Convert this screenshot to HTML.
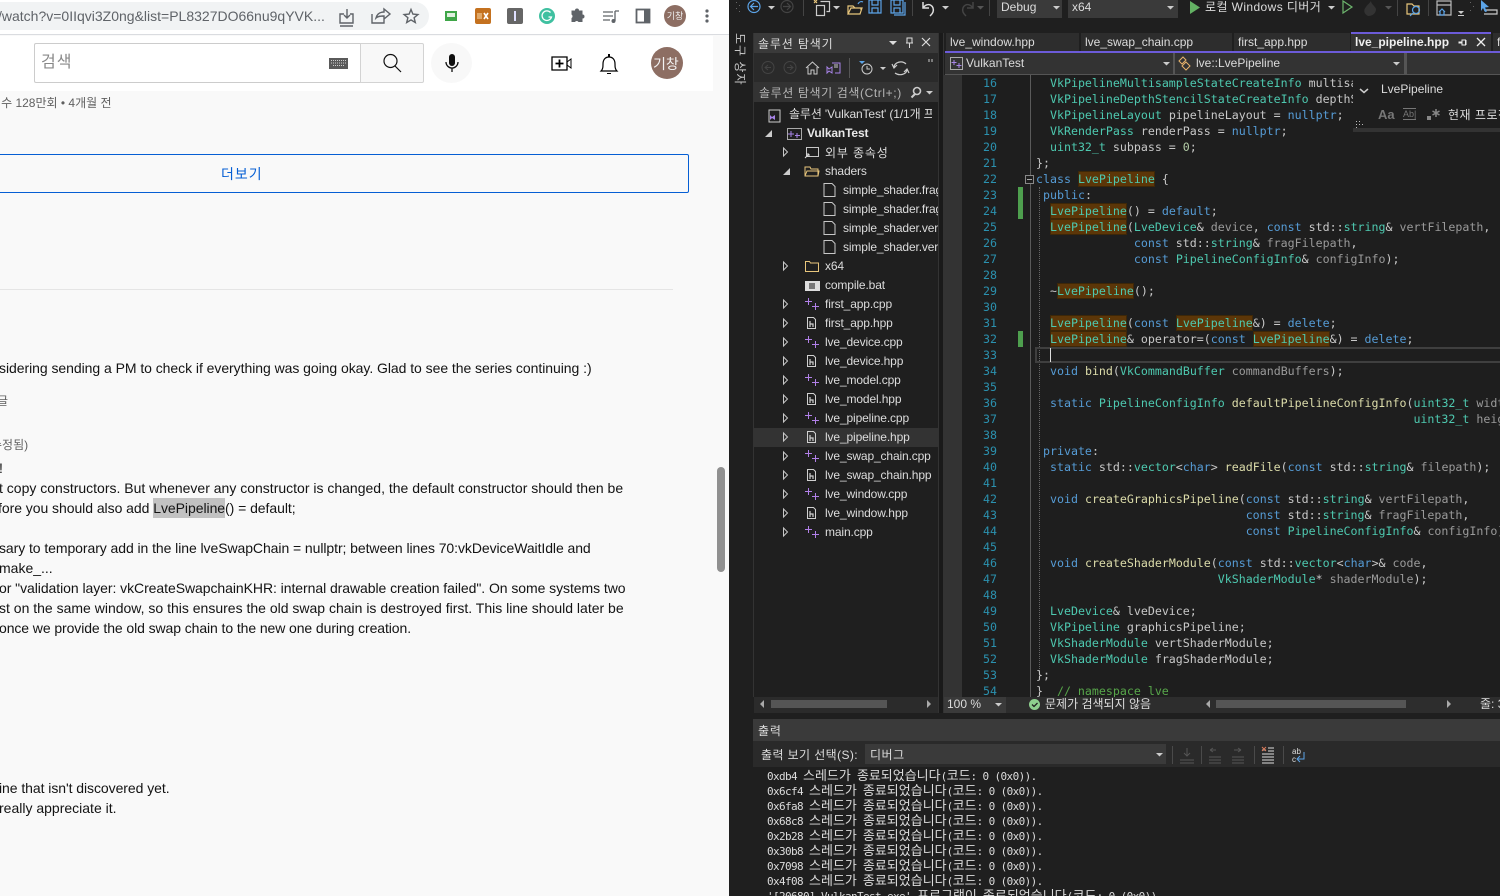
<!DOCTYPE html>
<html lang="ko"><head><meta charset="utf-8"><title>VS</title>
<style>
html,body{margin:0;padding:0;width:1500px;height:896px;overflow:hidden;background:#1f1f1f}
*{box-sizing:border-box}
body{position:relative;font-family:"Liberation Sans","Noto Sans CJK KR",sans-serif}
.a{position:absolute;white-space:pre}
svg{position:absolute;overflow:visible}
#web{position:absolute;left:0;top:0;width:729px;height:896px;background:#f9f9f9;overflow:hidden;color:#0f0f0f}
#web .t{position:absolute;left:0;font-size:14px;line-height:20px;white-space:pre;color:#131313}
#web .g{color:#606060}
#vs{position:absolute;left:729px;top:0;width:771px;height:896px;background:#1f1f1f;overflow:hidden}
.v{position:absolute;white-space:pre;color:#dcdcdc;font-size:12px;line-height:16px}
.tree{position:absolute;left:754px;top:102px;width:184px;height:595px;overflow:hidden}
.r{position:absolute;left:71px;white-space:pre;font-size:12px;letter-spacing:-.13px;line-height:19px;height:19px;color:#dcdcdc}
.code{position:absolute;left:1036px;top:75px;width:464px;height:622px;overflow:hidden;font-family:"DejaVu Sans Mono",monospace;font-size:11.62px;line-height:16px;color:#c8c8c8}
.code div{position:absolute;left:0;white-space:pre;height:16px}
.n{position:absolute;left:962px;width:35px;text-align:right;font-family:"DejaVu Sans Mono",monospace;font-size:11.62px;line-height:16px;color:#2b91af;white-space:pre}
.ty{color:#4ec9b0}.kw{color:#569cd6}.fn{color:#dcdcaa}.pa{color:#9a9a9a}.co{color:#57a64a}.nu{color:#b5cea8}
.h{display:inline-block;height:16px;background:#5c3608;box-shadow:inset 0 0 0 1px #3d2708;color:#4ec9b0}
.tab{position:absolute;top:33px;height:18px;background:#2d2d2d;color:#dcdcdc;font-size:12px;line-height:18px;padding-left:4px;white-space:pre;overflow:hidden}
.out{position:absolute;left:767px;font-family:"DejaVu Sans Mono",monospace;font-size:11px;letter-spacing:-.62px;line-height:15px;color:#dcdcdc;white-space:pre}
.out b{font-weight:400;font-family:"Noto Sans CJK KR",sans-serif;font-size:13px;letter-spacing:0;line-height:15px}
.sep{position:absolute;width:1px;background:#4a4a4a}
</style></head><body>

<div id="web">
  <div style="position:absolute;left:0;top:0;width:729px;height:35px;background:#fff;border-bottom:1px solid #dadce0"></div>
  <div style="position:absolute;left:0;top:2px;width:429px;height:28px;background:#f1f3f4;border-radius:0 14px 14px 0"></div>
  <div class="a" style="left:-2px;top:8px;font-size:14px;line-height:16px;color:#5f6368">/watch?v=0IIqvi3Z0ng&amp;list=PL8327DO66nu9qYVK...</div>

  <svg style="left:0;top:0" width="729" height="92" viewBox="0 0 729 92">
    <g fill="none" stroke="#5f6368" stroke-width="1.4">
      <path d="M344 14h-4v9h13v-9h-3M347 9v9M344 15l3 3 3-3M340 26h13"/>
      <path d="M372 14v9h12v-4M376 18c1-4 4-6 8-6V9l6 5-6 5v-3c-3 0-6 0-8 2z"/>
      <path d="M411 9.500l1.900 4.600 5 .4-3.800 3.200 1.200 4.800-4.300-2.600-4.300 2.600 1.200-4.800-3.800-3.200 5-.4z"/>
    </g>
    <rect x="445" y="11" width="12" height="10" fill="#3fa648"/><rect x="447" y="13" width="8" height="4" fill="#dff0df"/>
    <rect x="475" y="8" width="16" height="16" rx="2" fill="#c4711f"/><rect x="477" y="13" width="5" height="6" fill="#e0a868"/><path d="M484 13l4 6M488 13l-4 6" stroke="#fff" stroke-width="1.600"/>
    <rect x="507" y="8" width="16" height="16" rx="2" fill="#666"/><rect x="514" y="11" width="2" height="10" fill="#dfe0ff"/>
    <circle cx="547" cy="16" r="8" fill="#3fc0a0"/><path d="M550.500 12.500a4.800 4.800 0 1 0 1 4.500h-3" fill="none" stroke="#fff" stroke-width="1.300"/>
    <path d="M572 12h3.500a2 2 0 0 1 4 0h3.500v4a2 2 0 0 1 0 4v3.500h-4a2 2 0 0 0-3.500 0H572v-4a2 2 0 0 0 0-3.500z" fill="#5f6368" transform="translate(-.5 -1.500)"/>
    <path d="M603 12h10M603 16h10M603 20h7M615 11h4M615 11v10" stroke="#5f6368" stroke-width="1.300" fill="none"/><circle cx="613.500" cy="21" r="2" fill="#5f6368"/>
    <rect x="636.500" y="9.500" width="13" height="13" fill="#fff" stroke="#5f6368" stroke-width="1.800"/><rect x="644" y="9" width="6" height="14" fill="#5f6368"/>
    <circle cx="675" cy="16" r="11" fill="#8d6e63"/>
    <circle cx="707" cy="11" r="1.600" fill="#5f6368"/><circle cx="707" cy="16" r="1.600" fill="#5f6368"/><circle cx="707" cy="21" r="1.600" fill="#5f6368"/>
  </svg>
  <div class="a" style="left:665px;top:10px;width:20px;text-align:center;font-size:9px;line-height:12px;color:#eee">기창</div>

  <!-- masthead -->
  <div style="position:absolute;left:0;top:36px;width:713px;height:55px;background:#fff"></div>
  <div style="position:absolute;left:34px;top:43px;width:327px;height:40px;background:#fff;border:1px solid #ccc;border-right:0;border-radius:2px 0 0 2px"></div>
  <div style="position:absolute;left:360px;top:43px;width:64px;height:40px;background:#f8f8f8;border:1px solid #d3d3d3;border-radius:0 2px 2px 0"></div>
  <div class="a" style="left:41px;top:53px;font-size:16px;letter-spacing:1px;line-height:20px;color:#888">검색</div>
  <div style="position:absolute;left:431px;top:43px;width:41px;height:40px;border-radius:50%;background:#f8f8f8"></div>
  <svg style="left:0;top:0" width="729" height="92" viewBox="0 0 729 92">
    <rect x="329" y="58" width="19" height="11" fill="#5a5a5a"/>
    <path d="M331 60.500h15M331 63h15M333 65.500h11" stroke="#cfcfcf" stroke-width="1" stroke-dasharray="1 1"/>
    <circle cx="390.500" cy="61" r="6.500" fill="none" stroke="#111" stroke-width="1.200"/><path d="M395 66l6 6" stroke="#111" stroke-width="1.200"/>
    <rect x="449" y="54" width="6" height="12" rx="3" fill="#0f0f0f"/><path d="M446 62a6 6 0 0 0 12 0M452 68v4" stroke="#0f0f0f" stroke-width="1.300" fill="none"/>
    <path d="M552 57h15v13h-15z" fill="none" stroke="#000" stroke-width="1.300"/><path d="M567 62l4-3v9l-4-3" fill="none" stroke="#000"/><path d="M559.500 59.500v8M555.500 63.500h8" stroke="#000" stroke-width="1.800"/>
    <path d="M601 71c2-2 2-4 2-7 0-4 2-7 6-7s6 3 6 7c0 3 0 5 2 7z" fill="none" stroke="#000" stroke-width="1.200"/><path d="M608 54h2v3h-2zM607 73h4v1h-4z" fill="#000"/>
    <circle cx="667" cy="63" r="16" fill="#8d6e63"/>
  </svg>
  <div class="a" style="left:653px;top:54px;font-size:14px;line-height:20px;color:#f3f3f3">기창</div>

  <div class="t g" style="top:93px;font-size:12px;left:-21px">조회수 128만회 • 4개월 전</div>
  <div style="position:absolute;left:-2px;top:154px;width:691px;height:39px;border:1px solid #065fd4;border-radius:2px"></div>
  <div class="t" style="left:221px;top:164px;color:#065fd4;letter-spacing:1px">더보기</div>
  <div style="position:absolute;left:0;top:289px;width:673px;height:1px;background:#e5e5e5"></div>

  <div class="t" style="top:358px;left:-1px;letter-spacing:-.05px">sidering sending a PM to check if everything was going okay. Glad to see the series continuing :)</div>
  <div class="t g" style="top:391px;left:-14px;font-size:12px">답글</div>
  <div class="t g" style="top:435px;left:-13px;font-size:12px">(수정됨)</div>
  <div class="t" style="top:458px;left:-1px">!</div>
  <div class="t" style="top:478px;left:-1px">t copy constructors. But whenever any constructor is changed, the default constructor should then be</div>
  <div class="t" style="top:498px;left:-2px;letter-spacing:-.05px">fore you should also add <span style="background:#c2c2c2;display:inline-block;height:20px">LvePipeline</span>() = default;</div>
  <div class="t" style="top:538px;left:-1px;letter-spacing:-.07px">sary to temporary add in the line lveSwapChain = nullptr; between lines 70:vkDeviceWaitIdle and</div>
  <div class="t" style="top:558px;left:-1px">make_...</div>
  <div class="t" style="top:578px;left:-1px;letter-spacing:-.06px">or "validation layer: vkCreateSwapchainKHR: internal drawable creation failed". On some systems two</div>
  <div class="t" style="top:598px;left:-1px">st on the same window, so this ensures the old swap chain is destroyed first. This line should later be</div>
  <div class="t" style="top:618px;left:-1px;letter-spacing:-.09px">once we provide the old swap chain to the new one during creation.</div>
  <div class="t" style="top:778px;left:-1px;letter-spacing:-.06px">ine that isn't discovered yet.</div>
  <div class="t" style="top:798px;left:-1px">really appreciate it.</div>

  <div style="position:absolute;left:717px;top:467px;width:8px;height:105px;background:#909090;border-radius:4px"></div>
</div>

<div id="vs"></div>

<!-- VS toolbar -->
<svg style="left:0;top:0" width="1500" height="130" viewBox="0 0 1500 130">
  <g fill="none" stroke-width="1.200">
    <circle cx="754" cy="6.500" r="6" stroke="#5ca4e8"/><path d="M758 6.500h-7M754 3l-3.500 3.500 3.500 3.500" stroke="#5ca4e8"/>
    <circle cx="787" cy="6.500" r="6" stroke="#444"/><path d="M783 6.500h7M787 3l3.500 3.500-3.500 3.500" stroke="#444"/>
    <path d="M820.500 1.500h9v10h-3" stroke="#ccc"/><rect x="816.500" y="5.500" width="8" height="10" stroke="#ccc"/><path d="M814 0l3 3M817 0l-3 3" stroke="#e8c67c"/>
    <path d="M848 14V6h5l2 2h6v2M848 14h12l2-6h-11z" stroke="#e8c67c"/><path d="M858 4c1-2 3-3 5-2" stroke="#5ca4e8"/>
    <path d="M869 0h12v13h-12zM872 0v5h6V0M872 13V8h6v5" stroke="#5ca4e8"/>
    <path d="M891 0h12v13h-12zM894 0v5h6V0M894 13V8h6v5M905 2v13h-11" stroke="#5ca4e8"/>
    <path d="M923 2v6h6M923 8c5-7 12-2 10 4-.6 1.800-2 3-3 4" stroke="#ddd" stroke-width="1.500"/>
    <path d="M973 2v6h-6M973 8c-5-7-12-2-10 4 .6 1.800 2 3 3 4" stroke="#444" stroke-width="1.500"/>
    <path d="M1349 2v12l9-6z" stroke="#6db56d" transform="translate(-6 -1)"/>
    <path d="M1407 14V4h5l2 2h5v8z" stroke="#e8c67c"/><circle cx="1416" cy="10" r="3.500" stroke="#5ca4e8"/><path d="M1413 13l-3 3" stroke="#5ca4e8"/>
    <path d="M1437 1h14v14h-14zM1437 5h14" stroke="#bbb"/><path d="M1439 12l3-3 3 3M1440 11v4h4v-4" stroke="#5ca4e8"/>
    <path d="M1484 10h13v4h-13" stroke="#ccc"/>
  </g>
  <path d="M1190 1v13l10-6.500z" fill="#63b163"/>
  <path d="M1368 16c-4-2-5-6-2-9 1-2 3-3 5-6 0 3 4 5 5 8 0 4-3 7-8 7z" fill="#333"/>
  <path d="M1481 0l8 7-4 .5 2 4-2 .5-2-4-2 3z" fill="#5ca4e8"/>
  <g fill="#ccc"><path d="M768 6h7l-3.500 3.500z"/><path d="M833 6h7l-3.500 3.500z"/><path d="M942 6h7l-3.500 3.500z"/><path d="M1328 6h7l-3.500 3.500z"/><path d="M1458 11h6l-3 3zM1458 15h6v1h-6z"/></g>
  <g fill="#555"><path d="M977 6h7l-3.500 3.500z"/><path d="M1385 6h7l-3.500 3.500z"/></g>
  <g fill="#444"><rect x="803" width="1" height="16"/><rect x="912" width="1" height="16"/><rect x="989" width="1" height="16"/><rect x="1397" width="1" height="16"/><rect x="1428" width="1" height="16"/></g>
  <g fill="#666"><rect x="736" y="2" width="1" height="1"/><rect x="739" y="5" width="1" height="1"/><rect x="736" y="8" width="1" height="1"/><rect x="739" y="11" width="1" height="1"/><rect x="1470" y="2" width="1" height="1"/><rect x="1473" y="6" width="1" height="1"/><rect x="1470" y="10" width="1" height="1"/></g>
</svg>
<div style="position:absolute;left:997px;top:0;width:65px;height:18px;background:#3a3a3a"></div>
<div style="position:absolute;left:1068px;top:0;width:110px;height:18px;background:#3a3a3a"></div>
<div class="v" style="left:1001px;top:-1px">Debug</div>
<div class="v" style="left:1072px;top:-1px">x64</div>
<div class="v" style="left:1205px;top:-1px;letter-spacing:.4px">로컬 Windows 디버거</div>
<svg style="left:0;top:0" width="1500" height="20"><path d="M1053 6h7l-3.500 3.500zM1167 6h7l-3.500 3.500z" fill="#ccc"/></svg>

<!-- left strip -->
<div class="v" style="left:732px;top:33px;writing-mode:vertical-rl;text-orientation:sideways;font-size:12px;letter-spacing:1px;line-height:16px;color:#c8c8c8;height:54px">도구 상자</div>

<!-- solution explorer -->
<div style="position:absolute;left:753px;top:33px;width:185px;height:20px;background:#3a3a3a"></div>
<div style="position:absolute;left:753px;top:53px;width:185px;height:29px;background:#2a2a2a"></div>
<div style="position:absolute;left:753px;top:82px;width:185px;height:20px;background:#333"></div>
<div style="position:absolute;left:753px;top:33px;width:1px;height:664px;background:#333"></div>
<div style="position:absolute;left:938px;top:33px;width:6px;height:680px;background:#1a1a1a;border-left:1px solid #333;border-right:1px solid #333"></div>
<div class="v" style="left:758px;top:36px;letter-spacing:.85px">솔루션 탐색기</div>
<div class="v" style="left:759px;top:85px;color:#b5b5b5;letter-spacing:.6px">솔루션 탐색기 검색(Ctrl+;)</div>
<svg style="left:0;top:0" width="940" height="102" viewBox="0 0 940 102">
  <path d="M889 41h8l-4 4z" fill="#ddd"/>
  <path d="M907 38h5v5h-5zM906 43h7M909.500 43v5" fill="none" stroke="#ddd"/>
  <path d="M922 38l8 8M930 38l-8 8" stroke="#ddd" stroke-width="1.200"/>
  <g fill="none" stroke="#444"><circle cx="768" cy="67.500" r="6"/><path d="M771 67.500h-6M768 65l-3 2.500 3 2.500"/><circle cx="790" cy="67.500" r="6"/><path d="M787 67.500h6M790 65l3 2.500-3 2.500"/></g>
  <path d="M806 68l6.500-6 6.500 6M808 67v7h3v-4h3v4h3v-7" fill="none" stroke="#ccc"/>
  <path d="M829 69l3-2v6l-3-2-2 2v-6zM832 63h8v10h-5" fill="none" stroke="#a884e8"/><path d="M834 65h4M834 67h4" stroke="#ccc"/>
  <rect x="849" y="58" width="1" height="20" fill="#555"/>
  <path d="M859 61h6l-3 3z" fill="#5ca4e8"/><circle cx="867" cy="69" r="5" fill="none" stroke="#ccc"/><path d="M867 66v3h3" fill="none" stroke="#ccc"/>
  <path d="M880 67h6l-3 3z" fill="#ccc"/>
  <path d="M894 68c0-6 8-8 12-4M892 64l2 4 3-3M907 69c0 6-8 7-12 4M909 73l-2-4-3 3" fill="none" stroke="#ccc" stroke-width="1.200"/>
  <path d="M929 59v3M932 59v3" stroke="#ccc"/>
  <circle cx="917" cy="91" r="3.500" fill="none" stroke="#ccc" stroke-width="1.600"/><path d="M915 94l-3.500 3.500" stroke="#ccc" stroke-width="2"/>
  <path d="M926 91h7l-3.500 3.500z" fill="#ccc"/>
</svg>

<!-- tree -->
<div class="tree">
  <div style="position:absolute;left:0;top:326px;width:184px;height:19px;background:#333"></div>
  <div class="r" style="left:35px;top:3px;width:143px;overflow:hidden">솔루션 'VulkanTest' (1/1개 프로젝트)</div>
  <div class="r" style="left:53px;top:22px;font-weight:700;color:#e8e8e8">VulkanTest</div>
  <div class="r" style="top:42px;letter-spacing:.85px">외부 종속성</div>
  <div class="r" style="top:60px">shaders</div>
  <div class="r" style="left:89px;top:79px">simple_shader.frag</div>
  <div class="r" style="left:89px;top:98px">simple_shader.frag.spv</div>
  <div class="r" style="left:89px;top:117px">simple_shader.vert</div>
  <div class="r" style="left:89px;top:136px">simple_shader.vert.spv</div>
  <div class="r" style="top:155px">x64</div>
  <div class="r" style="top:174px">compile.bat</div>
  <div class="r" style="top:193px">first_app.cpp</div>
  <div class="r" style="top:212px">first_app.hpp</div>
  <div class="r" style="top:231px">lve_device.cpp</div>
  <div class="r" style="top:250px">lve_device.hpp</div>
  <div class="r" style="top:269px">lve_model.cpp</div>
  <div class="r" style="top:288px">lve_model.hpp</div>
  <div class="r" style="top:307px">lve_pipeline.cpp</div>
  <div class="r" style="top:326px">lve_pipeline.hpp</div>
  <div class="r" style="top:345px">lve_swap_chain.cpp</div>
  <div class="r" style="top:364px">lve_swap_chain.hpp</div>
  <div class="r" style="top:383px">lve_window.cpp</div>
  <div class="r" style="top:402px">lve_window.hpp</div>
  <div class="r" style="top:421px">main.cpp</div>
</div>
<svg style="left:0;top:0" width="940" height="560" viewBox="0 0 940 560">
  <defs>
    <path id="ar" d="M783.500 -4v8l4-4z" fill="none" stroke="#c8c8c8"/>
    <g id="pl" stroke="#b180e8" stroke-width="1" fill="none"><path d="M808.500 -6v7M805 -2.500h7M815.500 -1v7M812 2.500h7"/></g>
    <g id="hd" fill="none" stroke="#d0d0d0"><path d="M807.500 -5.500h6l2 2v9h-8z"/><path d="M810 -2v6M810 1h3v3" stroke-width="1.200"/></g>
    <path id="fl" d="M824 -6.500h8l3 3v10h-11z" fill="none" stroke="#c8c8c8"/>
  </defs>
  <path d="M769 110h11v12h-11z" fill="none" stroke="#ccc"/><path d="M772 117l3-2v5l-3-2-2 2v-5z" fill="#a884e8"/>
  <path d="M765 137h7v-7z" fill="#ccc"/>
  <rect x="787.500" y="128.500" width="14" height="11" fill="none" stroke="#aaa"/><path d="M791 131v6M788 134h6M797 133v5M795 135.500h5" stroke="#a884e8"/>
  <use href="#ar" y="152"/>
  <rect x="806.500" y="147.500" width="12" height="9" fill="none" stroke="#c8c8c8"/><path d="M805 158l4-4M809 154h-3M809 154v3" stroke="#ddd"/>
  <path d="M783 175h7v-7z" fill="#ccc"/>
  <path d="M805 176v-9h5l1 2h7v7zM805 176l2-5h12l-1 5" fill="none" stroke="#e8c67c"/>
  <use href="#fl" y="190"/><use href="#fl" y="209"/><use href="#fl" y="228"/><use href="#fl" y="247"/>
  <use href="#ar" y="266"/><path d="M805.500 271.500v-10h4l1 1.500h8v8.500z" fill="none" stroke="#e8c67c"/>
  <rect x="805" y="281" width="15" height="10" fill="#ddd"/><rect x="809" y="283" width="6" height="6" fill="#777"/>
  <g>
    <use href="#ar" y="304"/><use href="#pl" y="304"/>
    <use href="#ar" y="323"/><use href="#hd" y="323"/>
    <use href="#ar" y="342"/><use href="#pl" y="342"/>
    <use href="#ar" y="361"/><use href="#hd" y="361"/>
    <use href="#ar" y="380"/><use href="#pl" y="380"/>
    <use href="#ar" y="399"/><use href="#hd" y="399"/>
    <use href="#ar" y="418"/><use href="#pl" y="418"/>
    <use href="#ar" y="437"/><use href="#hd" y="437"/>
    <use href="#ar" y="456"/><use href="#pl" y="456"/>
    <use href="#ar" y="475"/><use href="#hd" y="475"/>
    <use href="#ar" y="494"/><use href="#pl" y="494"/>
    <use href="#ar" y="513"/><use href="#hd" y="513"/>
    <use href="#ar" y="532"/><use href="#pl" y="532"/>
  </g>
</svg>

<!-- tabs -->
<div class="tab" style="left:946px;width:133px">lve_window.hpp</div>
<div class="tab" style="left:1081px;width:151px">lve_swap_chain.cpp</div>
<div class="tab" style="left:1234px;width:116px">first_app.hpp</div>
<div class="tab" style="left:1351px;width:140px;background:#333;font-weight:700;color:#f0f0f0;top:34px;height:17px;line-height:17px">lve_pipeline.hpp</div>
<div class="tab" style="left:1493px;width:7px">f</div>
<div style="position:absolute;left:1351px;top:32px;width:140px;height:2px;background:#6c5bd9"></div>
<div style="position:absolute;left:945px;top:51px;width:555px;height:2px;background:#6c5bd9"></div>
<svg style="left:0;top:0" width="1500" height="60"><path d="M1459 42h3v-2h3.500v5H1462v-2h-3zM1466 40v5" stroke="#eee" fill="none"/><path d="M1477 38l8 8M1485 38l-8 8" stroke="#eee" stroke-width="1.300"/></svg>

<!-- nav bar -->
<div style="position:absolute;left:945px;top:53px;width:555px;height:22px;background:#555"></div>
<div style="position:absolute;left:945px;top:53px;width:228px;height:21px;background:#333"></div>
<div style="position:absolute;left:1175px;top:53px;width:229px;height:21px;background:#333"></div>
<div style="position:absolute;left:1407px;top:53px;width:93px;height:21px;background:#333"></div>
<div class="v" style="left:966px;top:55px">VulkanTest</div>
<div class="v" style="left:1196px;top:55px">lve::LvePipeline</div>
<svg style="left:0;top:0" width="1500" height="76">
  <rect x="950.500" y="57.500" width="12" height="12" fill="none" stroke="#aaa"/><path d="M954 60v5M951.500 62.500h5M959 63v5M956.500 65.500h5" stroke="#a884e8"/>
  <path d="M1179 61l4-4 3 3-4 4zM1186 62l4 4-4 4-4-4z" fill="none" stroke="#e8b46c"/>
  <path d="M1163 62h7l-3.500 3.500zM1393 62h7l-3.500 3.500z" fill="#ccc"/>
</svg>

<!-- editor -->
<div style="position:absolute;left:944px;top:75px;width:18px;height:622px;background:#333"></div>
<div style="position:absolute;left:962px;top:75px;width:538px;height:622px;background:#1e1e1e"></div>
<div style="position:absolute;left:1018px;top:187px;width:5px;height:32px;background:#4e9f4e"></div>
<div style="position:absolute;left:1018px;top:331px;width:5px;height:16px;background:#4e9f4e"></div>
<div style="position:absolute;left:1030px;top:75px;width:1px;height:622px;background:#5a5a5a"></div>
<div style="position:absolute;left:1039px;top:187px;width:0;height:490px;border-left:1px dotted #666"></div>
<div style="position:absolute;left:1035px;top:347px;width:465px;height:16px;border:2px solid #3f3f3f;border-right:0"></div>
<div style="position:absolute;left:1050px;top:348px;width:1px;height:14px;background:#ddd"></div>
<div style="position:absolute;left:1025px;top:175px;width:9px;height:9px;border:1px solid #888;background:#1e1e1e"></div>
<div style="position:absolute;left:1027px;top:179px;width:5px;height:1px;background:#aaa"></div>

<div class="n" style="top:75px">16
17
18
19
20
21
22
23
24
25
26
27
28
29
30
31
32
33
34
35
36
37
38
39
40
41
42
43
44
45
46
47
48
49
50
51
52
53
54</div>

<div class="code">
<div style="top:0">  <span class="ty">VkPipelineMultisampleStateCreateInfo</span> multisampleInfo;</div>
<div style="top:16px">  <span class="ty">VkPipelineDepthStencilStateCreateInfo</span> depthStencilInfo;</div>
<div style="top:32px">  <span class="ty">VkPipelineLayout</span> pipelineLayout = <span class="kw">nullptr</span>;</div>
<div style="top:48px">  <span class="ty">VkRenderPass</span> renderPass = <span class="kw">nullptr</span>;</div>
<div style="top:64px">  <span class="ty">uint32_t</span> subpass = <span class="nu">0</span>;</div>
<div style="top:80px">};</div>
<div style="top:96px"><span class="kw">class</span> <span class="h">LvePipeline</span> {</div>
<div style="top:112px"> <span class="kw">public</span>:</div>
<div style="top:128px">  <span class="h">LvePipeline</span>() = <span class="kw">default</span>;</div>
<div style="top:144px">  <span class="h">LvePipeline</span>(<span class="ty">LveDevice</span>&amp; <span class="pa">device</span>, <span class="kw">const</span> std::<span class="ty">string</span>&amp; <span class="pa">vertFilepath</span>,</div>
<div style="top:160px">              <span class="kw">const</span> std::<span class="ty">string</span>&amp; <span class="pa">fragFilepath</span>,</div>
<div style="top:176px">              <span class="kw">const</span> <span class="ty">PipelineConfigInfo</span>&amp; <span class="pa">configInfo</span>);</div>
<div style="top:208px">  ~<span class="h">LvePipeline</span>();</div>
<div style="top:240px">  <span class="h">LvePipeline</span>(<span class="kw">const</span> <span class="h">LvePipeline</span>&amp;) = <span class="kw">delete</span>;</div>
<div style="top:256px">  <span class="h">LvePipeline</span>&amp; operator=(<span class="kw">const</span> <span class="h">LvePipeline</span>&amp;) = <span class="kw">delete</span>;</div>
<div style="top:288px">  <span class="kw">void</span> <span class="fn">bind</span>(<span class="ty">VkCommandBuffer</span> <span class="pa">commandBuffers</span>);</div>
<div style="top:320px">  <span class="kw">static</span> <span class="ty">PipelineConfigInfo</span> <span class="fn">defaultPipelineConfigInfo</span>(<span class="ty">uint32_t</span> <span class="pa">width</span>,</div>
<div style="top:336px">                                                      <span class="ty">uint32_t</span> <span class="pa">height</span>);</div>
<div style="top:368px"> <span class="kw">private</span>:</div>
<div style="top:384px">  <span class="kw">static</span> std::<span class="ty">vector</span>&lt;<span class="kw">char</span>&gt; <span class="fn">readFile</span>(<span class="kw">const</span> std::<span class="ty">string</span>&amp; <span class="pa">filepath</span>);</div>
<div style="top:416px">  <span class="kw">void</span> <span class="fn">createGraphicsPipeline</span>(<span class="kw">const</span> std::<span class="ty">string</span>&amp; <span class="pa">vertFilepath</span>,</div>
<div style="top:432px">                              <span class="kw">const</span> std::<span class="ty">string</span>&amp; <span class="pa">fragFilepath</span>,</div>
<div style="top:448px">                              <span class="kw">const</span> <span class="ty">PipelineConfigInfo</span>&amp; <span class="pa">configInfo</span>);</div>
<div style="top:480px">  <span class="kw">void</span> <span class="fn">createShaderModule</span>(<span class="kw">const</span> std::<span class="ty">vector</span>&lt;<span class="kw">char</span>&gt;&amp; <span class="pa">code</span>,</div>
<div style="top:496px">                          <span class="ty">VkShaderModule</span>* <span class="pa">shaderModule</span>);</div>
<div style="top:528px">  <span class="ty">LveDevice</span>&amp; lveDevice;</div>
<div style="top:544px">  <span class="ty">VkPipeline</span> graphicsPipeline;</div>
<div style="top:560px">  <span class="ty">VkShaderModule</span> vertShaderModule;</div>
<div style="top:576px">  <span class="ty">VkShaderModule</span> fragShaderModule;</div>
<div style="top:592px">};</div>
<div style="top:608px">}  <span class="co">// namespace lve</span></div>
</div>

<!-- find popup -->
<div style="position:absolute;left:1353px;top:75px;width:147px;height:53px;background:#1e1e1e"></div>
<div style="position:absolute;left:1353px;top:128px;width:147px;height:4px;background:#333"></div>
<div class="v" style="left:1381px;top:81px;font-size:12px">LvePipeline</div>
<div class="v" style="left:1448px;top:107px;font-size:12px;letter-spacing:.5px">현재 프로젝트</div>
<div class="v" style="left:1378px;top:107px;font-size:13px;font-weight:700;color:#777">Aa</div>
<div class="v" style="left:1403px;top:108px;font-size:9px;color:#777;border-top:1px solid #777;border-bottom:1px solid #777;line-height:10px;height:12px">Ab|</div>
<svg style="left:0;top:0" width="1500" height="135">
  <path d="M1360 89l4 3.500 4-3.500" fill="none" stroke="#ccc" stroke-width="1.500"/>
  <path d="M1427 116h4v4h-4z" fill="#888"/><path d="M1436 109v8M1432.500 111l7 4M1439.500 111l-7 4" stroke="#888" stroke-width="1.500"/>
  <path d="M1356 121h1v1h-1zM1359 121h1v1h-1zM1356 124h1v1h-1zM1359 124h1v1h-1zM1362 124h1v1h-1zM1356 127h1v1h-1z" fill="#bbb"/>
</svg>

<!-- scroll status bars -->
<div style="position:absolute;left:754px;top:697px;width:184px;height:16px;background:#2b2b2b"></div>
<div style="position:absolute;left:771px;top:700px;width:116px;height:8px;background:#555"></div>
<div style="position:absolute;left:944px;top:697px;width:556px;height:16px;background:#333"></div>
<div style="position:absolute;left:944px;top:697px;width:62px;height:16px;background:#3a3a3a"></div>
<div style="position:absolute;left:1006px;top:697px;width:494px;height:16px;background:#2d2d2d"></div>
<div style="position:absolute;left:1216px;top:700px;width:190px;height:8px;background:#555"></div>
<div class="v" style="left:947px;top:696px">100 %</div>
<div class="v" style="left:1045px;top:696px">문제가 검색되지 않음</div>
<div class="v" style="left:1480px;top:696px">줄: 33</div>
<svg style="left:0;top:0" width="1500" height="720">
  <path d="M764 700v8l-4-4zM927 700v8l4-4zM1210 700v8l-4-4zM1447 700v8l4-4z" fill="#aaa"/>
  <path d="M995 703h7l-3.500 3.500z" fill="#ccc"/>
  <circle cx="1034.500" cy="704.500" r="5.500" fill="#8ed08e"/><path d="M1032 704.500l2 2 3.500-3.500" fill="none" stroke="#222" stroke-width="1.300"/>
</svg>

<!-- output -->
<div style="position:absolute;left:753px;top:713px;width:747px;height:6px;background:#1f1f1f"></div>
<div style="position:absolute;left:753px;top:719px;width:747px;height:22px;background:#3a3a3a"></div>
<div style="position:absolute;left:753px;top:741px;width:747px;height:26px;background:#2a2a2a"></div>
<div style="position:absolute;left:865px;top:744px;width:301px;height:20px;background:#3a3a3a"></div>
<div class="v" style="left:758px;top:723px;letter-spacing:.8px">출력</div>
<div class="v" style="left:761px;top:747px;letter-spacing:.4px">출력 보기 선택(S):</div>
<div class="v" style="left:870px;top:747px;letter-spacing:.5px">디버그</div>
<div class="sep" style="left:1172px;top:746px;height:18px"></div>
<div class="sep" style="left:1201px;top:746px;height:18px"></div>
<div class="sep" style="left:1254px;top:746px;height:18px"></div>
<div class="sep" style="left:1283px;top:746px;height:18px"></div>
<svg style="left:0;top:0" width="1500" height="770">
  <path d="M1156 753h7l-3.500 3.500z" fill="#ccc"/>
  <path d="M1180 760h14M1180 763h14M1187 748v8M1184 753l3 3 3-3" stroke="#555" fill="none"/>
  <path d="M1209 757h12M1209 760h12M1209 763h12M1210 750h6M1210 750l3-2M1210 750l3 2M1232 757h12M1232 760h12M1232 763h12M1234 750h7M1241 750l-3-2M1241 750l-3 2" stroke="#555" fill="none"/>
  <path d="M1262 750h4M1268 748h6M1268 751h6M1262 754h12M1262 757h12M1262 760h12M1262 763h12" stroke="#ddd" fill="none"/>
  <path d="M1262 747l4 4M1266 747l-4 4" stroke="#d87a5a"/>
  <text x="1292" y="754" font-size="8" fill="#ddd" font-family="Liberation Sans">ab</text><text x="1292" y="762" font-size="8" fill="#ddd" font-family="Liberation Sans">c</text>
  <path d="M1304 752v7h-7M1300 756l-3 3 3 3" fill="none" stroke="#5ca4e8"/>
</svg>

<div class="out" style="top:767px">0xdb4 <b>스레드가</b> <b>종료되었습니다</b>(<b>코드</b>: 0 (0x0)).</div>
<div class="out" style="top:782px">0x6cf4 <b>스레드가</b> <b>종료되었습니다</b>(<b>코드</b>: 0 (0x0)).</div>
<div class="out" style="top:797px">0x6fa8 <b>스레드가</b> <b>종료되었습니다</b>(<b>코드</b>: 0 (0x0)).</div>
<div class="out" style="top:812px">0x68c8 <b>스레드가</b> <b>종료되었습니다</b>(<b>코드</b>: 0 (0x0)).</div>
<div class="out" style="top:827px">0x2b28 <b>스레드가</b> <b>종료되었습니다</b>(<b>코드</b>: 0 (0x0)).</div>
<div class="out" style="top:842px">0x30b8 <b>스레드가</b> <b>종료되었습니다</b>(<b>코드</b>: 0 (0x0)).</div>
<div class="out" style="top:857px">0x7098 <b>스레드가</b> <b>종료되었습니다</b>(<b>코드</b>: 0 (0x0)).</div>
<div class="out" style="top:872px">0x4f08 <b>스레드가</b> <b>종료되었습니다</b>(<b>코드</b>: 0 (0x0)).</div>
<div class="out" style="top:887px">'[20680] VulkanTest.exe' <b>프로그램이</b> <b>종료되었습니다</b>(<b>코드</b>: 0 (0x0)).</div>
</body></html>
